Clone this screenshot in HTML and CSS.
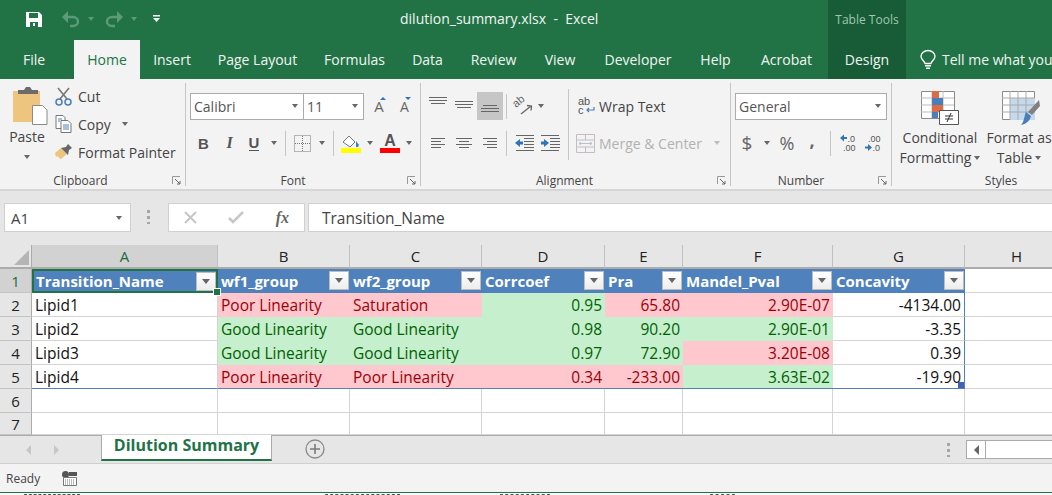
FILE: index.html
```html
<!DOCTYPE html>
<html lang="en">

<head>
    <meta charset="UTF-8">
    <title>dilution_summary.xlsx - Excel</title>
    <link rel="stylesheet" href="styles.css">
</head>

<body>
    <div class="app">
        <!-- title bar -->
        <header class="titlebar">
            <div class="qat">
                <svg class="qat-save" width="16" height="16" viewBox="0 0 16 16"><path fill="#fff" d="M0 1h13l3 3v12H0z"/><path fill="#217346" d="M3 2h9v5H3zM4 11h8v5H4z"/><path fill="#fff" d="M7 12h2v3H7z"/></svg>
                <svg class="qat-arrow" width="18" height="16" viewBox="0 0 18 16"><path fill="#5c9a78" d="M0 6l6-6v12z"/><path fill="none" stroke="#5c9a78" stroke-width="2.500" d="M5 6h6a5 4.500 0 0 1 0 9H8"/></svg>
                <i class="dd dd-dim"></i>
                <svg class="qat-arrow" width="18" height="16" viewBox="0 0 18 16"><path fill="#5c9a78" d="M18 6l-6-6v12z"/><path fill="none" stroke="#5c9a78" stroke-width="2.500" d="M13 6H7a5 4.500 0 0 0 0 9h3"/></svg>
                <i class="dd dd-dim"></i>
                <svg class="qat-more" width="7" height="8" viewBox="0 0 7 8"><path fill="#fff" d="M0 0h7v1.500H0zM0 3h7L3.500 7z"/></svg>
            </div>
            <div class="doc-title">dilution_summary.xlsx&nbsp; -&nbsp; Excel</div>
            <div class="tools-label">Table Tools</div>
        </header>

        <!-- tabs -->
        <nav class="tabs">
            <span class="tab tab-file">File</span>
            <span class="tab tab-home">Home</span>
            <span class="tab tab-insert">Insert</span>
            <span class="tab tab-layout">Page Layout</span>
            <span class="tab tab-formulas">Formulas</span>
            <span class="tab tab-data">Data</span>
            <span class="tab tab-review">Review</span>
            <span class="tab tab-view">View</span>
            <span class="tab tab-dev">Developer</span>
            <span class="tab tab-help">Help</span>
            <span class="tab tab-acrobat">Acrobat</span>
            <span class="tab tab-design">Design</span>
            <span class="tab tab-tell">
                <svg width="16" height="20" viewBox="0 0 16 20"><path fill="none" stroke="#fff" stroke-width="1.300" d="M5 13.500C4.500 11 1 9.500 1 6.500a7 6 0 0 1 14 0c0 3-3.500 4.500-4 7z"/><path fill="#fff" d="M5 15h6v1.500H5zM6 17.500h4V19H6z"/></svg>
                Tell me what you
            </span>
        </nav>

        <!-- ribbon -->
        <section class="ribbon">
            <div class="group group-clip">
                <div class="group-body clip-body">
                    <div class="paste">
                        <svg width="35" height="38" viewBox="0 0 35 38"><path fill="#edc57f" d="M0 4h27v31H0z"/><path fill="#6b6b6b" d="M5 3h6l2-3h4l2 3h6v4H5z"/><path fill="#fff" stroke="#8a8a8a" d="M19.500 18.500h10l4.500 4.500v14.500H19.500z"/></svg>
                        <span class="paste-label">Paste</span>
                        <i class="dd"></i>
                    </div>
                    <div class="clip-list">
                        <div class="clip-item">
                            <svg width="17" height="19" viewBox="0 0 17 19"><path fill="none" stroke="#777" stroke-width="1.600" d="M3 1l9 11M14 1L5 12"/><circle cx="4" cy="15" r="3" fill="none" stroke="#4a7ebb" stroke-width="1.500"/><circle cx="13" cy="15" r="3" fill="none" stroke="#4a7ebb" stroke-width="1.500"/></svg>
                            <span>Cut</span>
                        </div>
                        <div class="clip-item">
                            <svg width="17" height="18" viewBox="0 0 17 18"><path fill="#fff" stroke="#777" d="M1 .5h7l2 2v11H1z"/><path fill="#fff" stroke="#777" d="M6 5.500h7l3 3v9H6z"/><path stroke="#4a7ebb" d="M8 10h6M8 12h6M8 14h6M3 4h4M3 6h2"/></svg>
                            <span>Copy</span>
                            <i class="dd dd-gap"></i>
                        </div>
                        <div class="clip-item">
                            <svg width="17" height="16" viewBox="0 0 17 16"><path fill="#edc57f" d="M0 9l6-5 6 6-6 5-2-1-1-2-2 1z"/><path fill="#666" d="M6 4l5-1 2-3 4 4-3 2-1 5z"/></svg>
                            <span>Format Painter</span>
                        </div>
                    </div>
                </div>
                <div class="group-label">Clipboard<svg class="launcher" width="9" height="9" viewBox="0 0 9 9"><path fill="none" stroke="#999" d="M.5 8V.5H8"/><path fill="none" stroke="#666" d="M3 3l5 5M8 5v3H5"/></svg></div>
            </div>

            <div class="group group-font">
                <div class="group-body stack">
                    <div class="row row-top">
                        <div class="combo combo-font"><span>Calibri</span><i class="dd"></i></div>
                        <div class="combo combo-size"><span>11</span><i class="dd"></i></div>
                        <span class="slot s-grow-a"><b class="grow">A</b><i class="tick tick-up"></i></span>
                        <span class="slot s-shrink-a"><b class="grow small">A</b><i class="tick tick-down"></i></span>
                    </div>
                    <div class="row row-bottom">
                        <span class="slot s27"><b class="fmt">B</b></span>
                        <span class="slot s25"><b class="fmt fmt-i">I</b></span>
                        <span class="slot s24"><b class="fmt fmt-u">U</b></span>
                        <span class="slot s16"><i class="dd"></i></span>
                        <i class="vsep vsep-u"></i>
                        <span class="slot s32">
                            <svg width="17" height="17" viewBox="0 0 17 17"><path fill="none" stroke="#777" stroke-dasharray="1 1" d="M.5.500h16v16H.5z"/><path stroke="#777" stroke-dasharray="1 1" d="M8.500 1v15M1 8.500h15"/></svg>
                        </span>
                        <span class="slot s8"><i class="dd"></i></span>
                        <i class="vsep vsep-border"></i>
                        <span class="slot s32 fill-slot">
                            <svg width="20" height="19" viewBox="0 0 20 19"><path fill="#fff" stroke="#777" d="M2 8l6-6 6 6-5 5z"/><path fill="#4a7ebb" d="M15 7l3 4-1 2h-2z"/><path fill="#ff0" d="M0 14h20v5H0z"/></svg>
                        </span>
                        <span class="slot s6"><i class="dd"></i></span>
                        <span class="slot s34 color-a"><b>A</b><i class="color-bar"></i></span>
                        <span class="slot s4"><i class="dd"></i></span>
                    </div>
                </div>
                <div class="group-label">Font<svg class="launcher" width="9" height="9" viewBox="0 0 9 9"><path fill="none" stroke="#999" d="M.5 8V.5H8"/><path fill="none" stroke="#666" d="M3 3l5 5M8 5v3H5"/></svg></div>
            </div>

            <div class="group group-align">
                <div class="group-body align-body">
                    <div class="stack align-left">
                        <div class="row row-top">
                            <span class="slot s26"><svg class="al-top" width="18" height="10" viewBox="0 0 18 10"><path stroke="#666" d="M0 .5h18M0 3.500h18M2 6.500h14"/></svg></span>
                            <span class="slot s26"><svg width="18" height="10" viewBox="0 0 18 10"><path stroke="#666" d="M0 .5h18M0 3.500h18M2 6.500h14"/></svg></span>
                            <span class="slot s26 slot-on"><svg class="al-bottom" width="18" height="10" viewBox="0 0 18 10"><path stroke="#666" d="M2 .5h14M0 3.500h18M0 6.500h18"/></svg></span>
                            <i class="vsep vsep-align"></i>
                            <span class="slot s30 orient"><svg width="20" height="18" viewBox="0 0 20 18"><text class="orient-txt" transform="translate(2 11) rotate(-40)">ab</text><path fill="none" stroke="#666" stroke-width="1.300" d="M7 17l10-8M13 8.500l4.500.5-.5 4.500"/></svg></span>
                            <span class="slot s4"><i class="dd"></i></span>
                        </div>
                        <div class="row row-bottom">
                            <span class="slot s26"><svg width="16" height="11" viewBox="0 0 16 11"><path stroke="#666" d="M1 .5h14M1 3.500h10M1 6.500h14M1 9.500h10"/></svg></span>
                            <span class="slot s26"><svg width="16" height="11" viewBox="0 0 16 11"><path stroke="#666" d="M0 .5h16M3 3.500h10M0 6.500h16M3 9.500h10"/></svg></span>
                            <span class="slot s26"><svg width="16" height="11" viewBox="0 0 16 11"><path stroke="#666" d="M1 .5h14M5 3.500h10M1 6.500h14M5 9.500h10"/></svg></span>
                            <i class="vsep vsep-align"></i>
                            <span class="slot s26 outdent"><svg width="19" height="16" viewBox="0 0 19 16"><path stroke="#666" d="M1 .5h18M9 3.500h10M9 6.500h10M9 9.500h10M9 12.500h10M1 15.500h18"/><path fill="#2f75b5" d="M0 8l5-4v2.500h3v3H5V12z"/></svg></span>
                            <span class="slot s26"><svg width="19" height="16" viewBox="0 0 19 16"><path stroke="#666" d="M0 .5h18M9 3.500h10M9 6.500h10M9 9.500h10M9 12.500h10M0 15.500h18"/><path fill="#2f75b5" d="M8 8L3 4v2.500H0v3h3V12z"/></svg></span>
                        </div>
                    </div>
                    <i class="vsep-tall"></i>
                    <div class="align-right">
                        <span class="wrap-cmd">
                            <svg width="17" height="18" viewBox="0 0 17 18"><text x="0" y="8" class="wrap-txt">ab</text><text x="0" y="17" class="wrap-txt">c</text><path fill="none" stroke="#4a7ebb" stroke-width="1.200" d="M16 10v3H9M11 11l-2 2 2 2"/></svg>
                            Wrap Text
                        </span>
                        <span class="merge-cmd">
                            <svg width="19" height="19" viewBox="0 0 19 19"><path fill="none" stroke="#c3bdc3" d="M.5.500h18v18H.5zM.5 6h18M.5 13h18M9.500 1v5M9.500 13v5"/><path fill="none" stroke="#b5c3ce" d="M3 9.500h13M5 8l-2 1.500L5 11M14 8l2 1.500-2 1.500"/></svg>
                            Merge &amp; Center
                            <i class="dd dd-dim-gray"></i>
                        </span>
                    </div>
                </div>
                <div class="group-label">Alignment<svg class="launcher" width="9" height="9" viewBox="0 0 9 9"><path fill="none" stroke="#999" d="M.5 8V.5H8"/><path fill="none" stroke="#666" d="M3 3l5 5M8 5v3H5"/></svg></div>
            </div>

            <div class="group group-number">
                <div class="group-body stack">
                    <div class="row row-top">
                        <div class="combo combo-num"><span>General</span><i class="dd"></i></div>
                    </div>
                    <div class="row row-bottom">
                        <span class="slot s24 num-sym num-dollar">$</span>
                        <span class="slot s16"><i class="dd"></i></span>
                        <span class="slot s24 num-sym">%</span>
                        <span class="slot s26 num-sym num-comma">,</span>
                        <i class="vsep vsep-num"></i>
                        <span class="slot s34"><svg width="16" height="18" viewBox="0 0 16 18"><path fill="#2f75b5" d="M0 4l4-3.500V3h3v2H4v2.500z"/><text x="7.500" y="8" class="dec">.0</text><text x="3" y="17" class="dec">.00</text></svg></span>
                        <span class="slot s16"><svg width="16" height="18" viewBox="0 0 16 18"><text x="3" y="8" class="dec">.00</text><path fill="#2f75b5" d="M7 13.500L3 10v2.500H0v2h3V17z"/><text x="7.500" y="17" class="dec">.0</text></svg></span>
                    </div>
                </div>
                <div class="group-label">Number<svg class="launcher" width="9" height="9" viewBox="0 0 9 9"><path fill="none" stroke="#999" d="M.5 8V.5H8"/><path fill="none" stroke="#666" d="M3 3l5 5M8 5v3H5"/></svg></div>
            </div>

            <div class="group group-styles">
                <div class="group-body styles-body">
                    <div class="style-btn style-cf">
                        <svg width="38" height="35" viewBox="0 0 38 35"><path fill="#fff" stroke="#8a8a8a" d="M.5.500h33v27H.5z"/><path stroke="#bbb" d="M0 7h33M0 14h33M0 21h33M11 0v27M22 0v27"/><path fill="#dd6b45" d="M11 0h7v7h-7zM11 14h11v7H11z"/><path fill="#4a7ebb" d="M11 7h11v7H11zM11 21h6v6h-6z"/><path fill="#fff" stroke="#555" d="M18.500 19.500h19v14h-19z"/><path stroke="#333" d="M24 28h8M24 25h8M30 22l-4 9"/></svg>
                        <span>Conditional</span>
                        <span>Formatting <i class="dd"></i></span>
                    </div>
                    <div class="style-btn style-fat">
                        <svg width="38" height="35" viewBox="0 0 38 35"><path fill="#fff" stroke="#8a8a8a" d="M.5.500h32v28H.5z"/><path fill="#c5d9ed" d="M8 7h25v22H8z"/><path stroke="#aaa" d="M0 7h33M0 14h33M0 21h33M8 0v29M16 0v29M24 0v29"/><path fill="#808080" d="M37 9l1 6-8 9-4-3z"/><path fill="#4a7ebb" d="M24 21l5 4c-1 5-5 8-10 9 3-3 3-8 5-13z"/></svg>
                        <span>Format as</span>
                        <span>Table <i class="dd"></i></span>
                    </div>
                </div>
                <div class="group-label">Styles</div>
            </div>
        </section>

        <!-- formula bar -->
        <div class="formula-bar">
            <div class="name-box"><span>A1</span><i class="dd"></i></div>
            <span class="grip"></span>
            <div class="fx-box">
                <svg width="13" height="13" viewBox="0 0 13 13"><path stroke="#c6c6c6" stroke-width="2" d="M1 1l11 11M12 1L1 12"/></svg>
                <svg width="16" height="13" viewBox="0 0 16 13"><path fill="none" stroke="#c6c6c6" stroke-width="2.500" d="M1 7l4 4L15 1"/></svg>
                <span class="fx">fx</span>
            </div>
            <div class="formula-input">Transition_Name</div>
        </div>

        <!-- sheet -->
        <div class="sheet">
            <div class="cell corner"><i></i></div>
            <div class="cell col-head col-on">A</div>
            <div class="cell col-head">B</div>
            <div class="cell col-head">C</div>
            <div class="cell col-head">D</div>
            <div class="cell col-head">E</div>
            <div class="cell col-head">F</div>
            <div class="cell col-head">G</div>
            <div class="cell col-head">H</div>

            <div class="cell row-head row-on">1</div>
            <div class="cell th th-active">Transition_Name<i class="filter"></i></div>
            <div class="cell th">wf1_group<i class="filter"></i></div>
            <div class="cell th">wf2_group<i class="filter"></i></div>
            <div class="cell th">Corrcoef<i class="filter"></i></div>
            <div class="cell th">Pra<i class="filter"></i></div>
            <div class="cell th">Mandel_Pval<i class="filter"></i></div>
            <div class="cell th">Concavity<i class="filter"></i></div>
            <div class="cell"></div>

            <div class="cell row-head">2</div>
            <div class="cell">Lipid1</div>
            <div class="cell bad">Poor Linearity</div>
            <div class="cell bad">Saturation</div>
            <div class="cell good num">0.95</div>
            <div class="cell bad num">65.80</div>
            <div class="cell bad num">2.90E-07</div>
            <div class="cell num edge">-4134.00</div>
            <div class="cell"></div>

            <div class="cell row-head">3</div>
            <div class="cell">Lipid2</div>
            <div class="cell good">Good Linearity</div>
            <div class="cell good">Good Linearity</div>
            <div class="cell good num">0.98</div>
            <div class="cell good num">90.20</div>
            <div class="cell good num">2.90E-01</div>
            <div class="cell num edge">-3.35</div>
            <div class="cell"></div>

            <div class="cell row-head">4</div>
            <div class="cell">Lipid3</div>
            <div class="cell good">Good Linearity</div>
            <div class="cell good">Good Linearity</div>
            <div class="cell good num">0.97</div>
            <div class="cell good num">72.90</div>
            <div class="cell bad num">3.20E-08</div>
            <div class="cell num edge">0.39</div>
            <div class="cell"></div>

            <div class="cell row-head">5</div>
            <div class="cell last">Lipid4</div>
            <div class="cell bad last">Poor Linearity</div>
            <div class="cell bad last">Poor Linearity</div>
            <div class="cell bad num last">0.34</div>
            <div class="cell bad num last">-233.00</div>
            <div class="cell good num last">3.63E-02</div>
            <div class="cell num edge last resize">-19.90</div>
            <div class="cell"></div>

            <div class="cell row-head">6</div>
            <div class="cell"></div><div class="cell"></div><div class="cell"></div><div class="cell"></div><div class="cell"></div><div class="cell"></div><div class="cell"></div><div class="cell"></div>

            <div class="cell row-head">7</div>
            <div class="cell"></div><div class="cell"></div><div class="cell"></div><div class="cell"></div><div class="cell"></div><div class="cell"></div><div class="cell"></div><div class="cell"></div>
        </div>

        <!-- sheet tabs -->
        <div class="tabbar">
            <div class="tab-nav"><i class="tri tri-l"></i><i class="tri tri-r"></i></div>
            <div class="sheet-tab">Dilution Summary</div>
            <svg class="add-sheet" width="20" height="20" viewBox="0 0 20 20"><circle cx="10" cy="10" r="9" fill="none" stroke="#8a8a8a" stroke-width="1.300"/><path stroke="#7a7a7a" stroke-width="1.600" d="M5 10h10M10 5v10"/></svg>
            <span class="grip grip-tab"></span>
            <div class="hscroll"><span class="hscroll-btn"><i class="tri tri-dark"></i></span></div>
        </div>

        <!-- status bar -->
        <footer class="statusbar">
            <span>Ready</span>
            <svg width="15" height="15" viewBox="0 0 15 15"><circle cx="3.500" cy="3.500" r="3.500" fill="#555"/><path fill="#555" d="M7 1h8v4H7z"/><path fill="#fff" stroke="#777" d="M1.500 6.500h13v8h-13z"/><path stroke="#777" stroke-dasharray="1 1" d="M3 9h10M3 11h10M3 13h10"/></svg>
        </footer>
        <div class="under-window">
            <i class="u1"></i><i class="u2"></i><i class="u3"></i><i class="u4"></i>
        </div>
    </div>
</body>

</html>
```
FILE: styles.css
```css
* {
    box-sizing: border-box;
}

html,
body {
    margin: 0;
    padding: 0;
    height: 495px;
    overflow: hidden;
}

body {
    font-family: "Open Sans", "Noto Sans", sans-serif;
    font-size: 14px;
    color: #444;
    background: #fff;
}

i {
    display: block;
    font-style: normal;
}

svg {
    display: block;
    flex: none;
    overflow: visible;
}

.app {
    width: 1052px;
    height: 495px;
    display: flex;
    flex-direction: column;
    overflow: hidden;
}

/* title bar */
.titlebar {
    height: 40px;
    flex: none;
    background: #217346;
    display: flex;
    color: #fff;
}

.qat {
    width: 400px;
    display: flex;
    align-items: center;
    padding: 0 0 2px 26px;
}

.qat-save + .qat-arrow {
    margin-left: 20px;
}

.qat .dd {
    margin-left: 7.500px;
}

.qat .dd + .qat-arrow {
    margin-left: 11.500px;
}

.qat-more {
    margin-left: 16.500px;
}

.doc-title {
    width: 428px;
    padding-top: 9px;
    font-size: 14px;
    color: #f1f6f3;
}

.tools-label {
    width: 78px;
    padding-top: 11px;
    background: #185c37;
    color: #a0c6b1;
    font-size: 12px;
    text-align: center;
    white-space: nowrap;
}

/* tabs */
.tabs {
    height: 39px;
    flex: none;
    background: #217346;
    display: flex;
    color: #f1f6f3;
    font-size: 14px;
}

.tab {
    display: flex;
    align-items: center;
    justify-content: center;
    white-space: nowrap;
    flex: none;
}

.tab-file { width: 74px; padding-right: 6px; }
.tab-home { width: 66px; background: #f3f3f3; color: #217346; }
.tab-insert { width: 64px; }
.tab-layout { width: 107px; }
.tab-formulas { width: 87px; }
.tab-data { width: 59px; }
.tab-review { width: 73px; }
.tab-view { width: 60px; }
.tab-dev { width: 96px; }
.tab-help { width: 59px; }
.tab-acrobat { width: 83px; }
.tab-design { width: 78px; background: #185c37; }

.tab-tell {
    flex: 1;
    min-width: 0;
    justify-content: flex-start;
    gap: 6px;
    padding-left: 14px;
    overflow: hidden;
}

/* ribbon */
.ribbon {
    height: 112px;
    flex: none;
    background: #f3f3f3;
    border-bottom: 2px solid #d6d6d6;
    display: flex;
    padding-top: 4px;
}

.group {
    display: flex;
    flex-direction: column;
    flex: none;
    height: 103px;
    border-right: 1px solid #c6c6c6;
    position: relative;
}

.group-clip { width: 186px; }
.group-font { width: 235px; }
.group-align { width: 310px; }
.group-number { width: 161px; }
.group-styles { width: 160px; border-right: 0; }

.group-body {
    flex: 1;
    min-height: 0;
}

.group-label {
    height: 10px;
    text-align: center;
    font-size: 12px;
    color: #444;
    line-height: 10px;
    white-space: nowrap;
}

.group-clip .group-label { padding-right: 24px; }
.group-font .group-label { padding-right: 20px; }
.group-align .group-label { padding-right: 22px; }
.group-number .group-label { padding-right: 20px; }
.group-styles .group-label { padding-left: 58px; padding-right: 0; }

.launcher {
    position: absolute;
    right: 4px;
    bottom: 1px;
}

.dd {
    width: 0;
    height: 0;
    border: 3.500px solid transparent;
    border-top: 4px solid #666;
    border-bottom: 0;
    flex: none;
}

.dd-dim {
    border-top-color: #5c9a78;
}

.dd-dim-gray {
    border-top-color: #bdbdbd;
    margin-left: 8px;
}

.dd-gap {
    margin-left: 5px;
}

/* clipboard */
.clip-body {
    display: flex;
}

.paste {
    width: 55px;
    display: flex;
    flex-direction: column;
    align-items: center;
    padding: 4px 0 0 5px;
    font-size: 14px;
}

.paste-label {
    margin: 2px 6px 0 0;
    line-height: 20px;
}

.paste .dd {
    margin: 8px 6px 0 0;
}

.clip-list {
    display: flex;
    flex-direction: column;
    margin-top: -1px;
}

.clip-item {
    height: 28px;
    display: flex;
    align-items: center;
    gap: 6px;
    font-size: 14px;
    white-space: nowrap;
}

/* rows of small tools */
.stack {
    display: flex;
    flex-direction: column;
    padding-left: 4px;
}

.row {
    display: flex;
    align-items: center;
}

.row-top {
    height: 28px;
    margin-top: 9px;
}

.row-bottom {
    height: 26px;
    margin-top: 10px;
}

.slot {
    height: 100%;
    display: flex;
    align-items: center;
    justify-content: center;
    flex: none;
    position: relative;
}

.s4 { width: 4px; }
.s6 { width: 6px; }
.s8 { width: 8px; }
.s16 { width: 16px; }
.s24 { width: 24px; }
.s25 { width: 25px; }
.s26 { width: 26px; }
.s27 { width: 27px; }
.s30 { width: 30px; }
.s32 { width: 32px; }
.s34 { width: 34px; }

.slot-on {
    background: #c6c6c6;
}

.vsep {
    width: 1px;
    height: 25px;
    background: #c6c6c6;
    flex: none;
}

.vsep-u { margin-left: 3px; }
.vsep-border { margin-left: 7px; }
.vsep-align { margin-left: 3px; }
.vsep-num { margin-left: 5px; }

.fill-slot { margin-left: 1px; }

.combo {
    height: 27px;
    background: #fff;
    border: 1px solid #ababab;
    display: flex;
    align-items: center;
    justify-content: space-between;
    padding: 0 5px 0 3px;
    color: #555;
    font-size: 14px;
    flex: none;
}

.combo-font { width: 114px; }
.combo-size { width: 60px; border-left-width: 0; padding-left: 3px; }
.combo-num { width: 152px; }

.s-grow-a { width: 26px; margin-left: 2px; }
.s-shrink-a { width: 25px; }

.grow {
    font-weight: 400;
    font-size: 15px;
    color: #666;
}

.grow.small {
    font-size: 14px;
}

.tick {
    position: absolute;
    top: 5px;
    right: 6px;
    width: 0;
    height: 0;
    border: 3px solid transparent;
}

.tick-up {
    border-top: 0;
    border-bottom: 3px solid #2f75b5;
}

.tick-down {
    border-bottom: 0;
    border-top: 3px solid #2f75b5;
}

.fmt {
    font-family: "Liberation Sans", sans-serif;
    font-size: 15px;
    color: #555;
}

.fmt-i {
    font-family: "Liberation Serif", serif;
    font-style: italic;
    font-size: 16px;
}

.fmt-u {
    border-bottom: 1.500px solid #555;
    line-height: 14px;
}

.color-a {
    flex-direction: column;
    color: #555;
}

.color-a b {
    font-size: 16px;
    line-height: 15px;
    font-family: "Liberation Sans", sans-serif;
}

.color-bar {
    width: 20px;
    height: 5px;
    background: #f00;
}

/* alignment */
.align-body {
    display: flex;
}

.align-left {
    width: 147px;
}

.orient { margin-left: 2px; }
.outdent { margin-left: 4px; }

.orient-txt {
    font-size: 11px;
    fill: #666;
    font-family: "Liberation Sans", sans-serif;
}

.al-top {
    margin-bottom: 8px;
}

.al-bottom {
    margin-top: 8px;
}

.vsep-tall {
    width: 1px;
    height: 71px;
    margin-top: 6px;
    background: #c6c6c6;
    flex: none;
}

.align-right {
    display: flex;
    flex-direction: column;
    padding-top: 9px;
}

.wrap-cmd,
.merge-cmd {
    display: flex;
    align-items: center;
    gap: 4px;
    font-size: 14px;
    white-space: nowrap;
}

.wrap-cmd {
    height: 28px;
    margin-left: 9px;
}

.wrap-txt {
    font-size: 11px;
    fill: #555;
    font-family: "Liberation Sans", sans-serif;
}

.merge-cmd {
    height: 26px;
    margin: 10px 0 0 7px;
    color: #b1b1b1;
}

/* number */
.num-sym {
    font-size: 18px;
    color: #666;
}

.num-dollar {
    font-size: 19px;
}

.num-comma {
    font-weight: 700;
    padding-bottom: 6px;
}

.dec {
    font-size: 9px;
    fill: #555;
    font-family: "Liberation Sans", sans-serif;
}

/* styles */
.styles-body {
    display: flex;
    padding-left: 6px;
}

.style-btn {
    display: flex;
    flex-direction: column;
    align-items: center;
    flex: none;
    padding-top: 8px;
    font-size: 14px;
    line-height: 20px;
    white-space: nowrap;
}

.style-btn svg {
    margin-bottom: 2px;
}

.style-btn span {
    display: flex;
    align-items: center;
    gap: 3px;
}

.style-cf {
    width: 84px;
}

.style-fat {
    width: 74px;
}

.style-fat svg {
    margin-left: 4px;
}

/* formula bar */
.formula-bar {
    height: 54px;
    flex: none;
    background: #e6e6e6;
    display: flex;
    align-items: flex-start;
    padding: 12px 0 0 4px;
}

.name-box {
    width: 127px;
    height: 29px;
    background: #fff;
    border: 1px solid #d0d0d0;
    display: flex;
    align-items: center;
    justify-content: space-between;
    padding: 0 8px 0 6px;
    color: #444;
    font-size: 15px;
}

.grip {
    width: 3px;
    height: 14px;
    margin: 7px 18px 0 16px;
    background: repeating-linear-gradient(#a6a6a6 0 3px, transparent 3px 6px);
    flex: none;
}

.fx-box {
    width: 137px;
    height: 29px;
    background: #fff;
    border: 1px solid #d0d0d0;
    display: flex;
    align-items: center;
    justify-content: space-between;
    padding: 0 15px 0 15px;
}

.fx {
    font-family: "Liberation Serif", serif;
    font-style: italic;
    font-weight: 700;
    font-size: 16px;
    color: #666;
}

.formula-input {
    flex: 1;
    height: 29px;
    margin-left: 3px;
    background: #fff;
    border: 1px solid #d0d0d0;
    border-right: 0;
    padding-left: 13px;
    line-height: 29px;
    font-size: 15.500px;
    color: #444;
}

/* sheet */
.sheet {
    height: 190px;
    flex: none;
    display: grid;
    grid-template-columns: 32px 186px 132px 132px 123px 78px 150px 132px 104px;
    grid-template-rows: 24px repeat(6, 24px) 22px;
    background: #fff;
    overflow: hidden;
    font-size: 15.500px;
    color: #111;
}

.cell {
    border-right: 1px solid #d4d4d4;
    border-bottom: 1px solid #d4d4d4;
    padding: 0 3px;
    display: flex;
    align-items: center;
    white-space: nowrap;
    overflow: hidden;
    position: relative;
}

.corner {
    background: #e6e6e6;
    border-right: 1px solid #ababab;
    border-bottom: 2px solid #ababab;
}

.corner i {
    position: absolute;
    right: 2px;
    bottom: 2px;
    width: 0;
    height: 0;
    border-left: 15px solid transparent;
    border-bottom: 15px solid #b5b5b5;
}

.col-head {
    background: #e6e6e6;
    border-right: 1px solid #c0c0c0;
    border-bottom: 2px solid #ababab;
    justify-content: center;
    color: #222;
    font-size: 15px;
}

.col-on {
    background: #d2d2d2;
    color: #1c6b40;
}

.row-head {
    background: #e6e6e6;
    border-right: 1px solid #ababab;
    border-bottom: 1px solid #c4c4c4;
    justify-content: center;
    color: #222;
    font-size: 15px;
}

.row-on {
    background: #d2d2d2;
    color: #1c6b40;
}

.th {
    background: #4f81bd;
    color: #fff;
    font-weight: 700;
    font-size: 15px;
    border-right: 0;
    border-bottom: 0;
    padding-right: 0;
}

.th-active {
    outline: 2px solid #217346;
    outline-offset: -2px;
    border: 1px solid #fff;
    overflow: visible;
    z-index: 2;
}

.th-active::after {
    content: "";
    position: absolute;
    right: -4px;
    bottom: -4px;
    width: 6px;
    height: 6px;
    background: #217346;
    border: 1px solid #fff;
}

.filter {
    position: absolute;
    right: 1px;
    top: 2px;
    width: 20px;
    height: 19px;
    background: linear-gradient(#fff, #ededed);
    border: 1px solid #bdbdbd;
}

.filter::after {
    content: "";
    position: absolute;
    left: 5px;
    top: 6px;
    border: 4px solid transparent;
    border-top: 5px solid #666;
    border-bottom: 0;
}

.good {
    background: #c6efce;
    color: #006100;
    border-right: 0;
    border-bottom: 0;
}

.bad {
    background: #ffc7ce;
    color: #9c0006;
    border-right: 0;
    border-bottom: 0;
}

.num {
    justify-content: flex-end;
}

.edge {
    border-right: 1px solid #4f81bd;
}

.last {
    border-bottom: 1px solid #4f81bd;
}

.resize::after {
    content: "";
    position: absolute;
    right: 0;
    bottom: 0;
    width: 6px;
    height: 6px;
    background: #3f62b8;
}

/* sheet tabs */
.tabbar {
    height: 29px;
    flex: none;
    background: #e6e6e6;
    border-top: 1px solid #ababab;
    border-bottom: 1px solid #d0d0d0;
    display: flex;
    align-items: flex-start;
}

.tab-nav {
    width: 101px;
    height: 27px;
    display: flex;
    align-items: center;
    gap: 23px;
    padding-left: 26px;
    flex: none;
}

.tri {
    width: 0;
    height: 0;
    border: 5px solid transparent;
}

.tri-l {
    border-left: 0;
    border-right: 5px solid #c6c6c6;
}

.tri-r {
    border-right: 0;
    border-left: 5px solid #c6c6c6;
}

.tri-dark {
    border-left: 0;
    border-right: 5px solid #666;
}

.sheet-tab {
    width: 171px;
    height: 26px;
    margin-top: -1px;
    background: #fff;
    border-left: 1px solid #ababab;
    border-right: 1px solid #ababab;
    border-bottom: 2px solid #217346;
    color: #217346;
    font-weight: 700;
    font-size: 16px;
    text-align: center;
    line-height: 21px;
    white-space: nowrap;
    flex: none;
}

.add-sheet {
    margin: 3px 0 0 33px;
}

.grip-tab {
    margin: 7px 0 0 622px;
}

.hscroll {
    width: 90px;
    height: 19px;
    margin: 4px 0 0 16px;
    border: 1px solid #ababab;
    border-right: 0;
    background: #fff;
    flex: none;
}

.hscroll-btn {
    width: 19px;
    height: 17px;
    border-right: 1px solid #ababab;
    display: flex;
    align-items: center;
    justify-content: center;
}

/* status bar */
.statusbar {
    height: 28px;
    flex: none;
    background: #f3f3f3;
    display: flex;
    align-items: center;
    gap: 22px;
    padding: 0 0 0 6px;
    font-size: 12px;
    color: #444;
}

/* what shows under the window */
.under-window {
    flex: 1;
    border-top: 1px solid #217346;
    background: #fff;
    display: flex;
    padding-top: 1px;
}

.under-window i {
    height: 2px;
    border-top: 1px dashed #555;
}

.u1 { width: 56px; margin-left: 24px; }
.u2 { width: 75px; margin-left: 245px; }
.u3 { width: 50px; margin-left: 100px; }
.u4 { width: 25px; margin-left: 160px; }
```
